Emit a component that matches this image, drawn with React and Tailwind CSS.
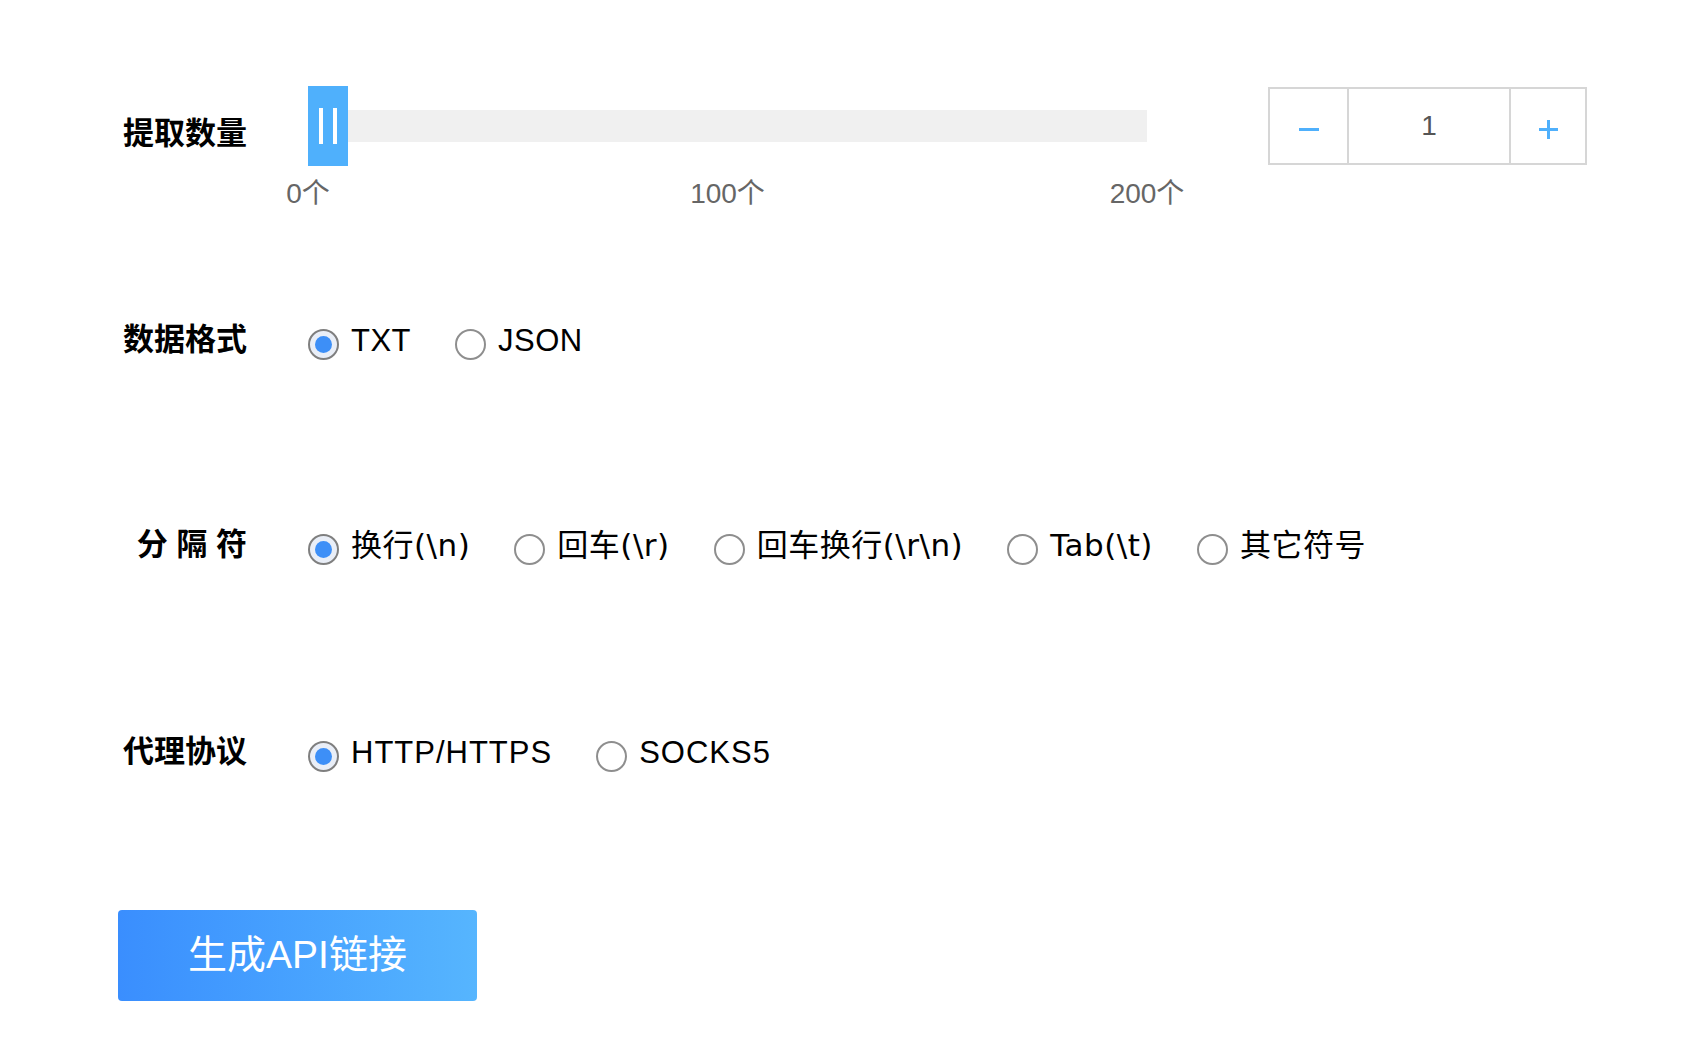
import React, { useState } from "react";

const FONT = "font-['Liberation_Sans','Noto_Sans_CJK_SC',sans-serif]";

function Radio({ checked, label, onClick, textClass }) {
  return (
    <button type="button" onClick={onClick} className="flex items-start gap-[12px] cursor-pointer">
      {checked ? (
        <span className="mt-[4px] flex size-[31px] shrink-0 items-center justify-center rounded-full border-2 border-[#7f7f7f] bg-[#e9eef7]">
          <span className="size-[17px] rounded-full bg-[#3d8ff7]" />
        </span>
      ) : (
        <span className="mt-[4px] size-[31px] shrink-0 rounded-full border-2 border-[#8e8e8e] bg-white" />
      )}
      <span className={"whitespace-pre text-[31px] leading-[31px] text-black " + textClass}>{label}</span>
    </button>
  );
}

function Label({ children, className = "" }) {
  return (
    <div className={"w-[129px] shrink-0 whitespace-pre text-right text-[31px] font-bold leading-[31px] text-black " + className}>
      {children}
    </div>
  );
}

function RadioRow({ label, options, className, textClass = "" }) {
  const [selected, setSelected] = useState(0);
  return (
    <div className={"flex h-[60px] items-center " + className}>
      <Label className="mb-[5px]">{label}</Label>
      <div className="ml-[61px] flex items-center gap-[44px]">
        {options.map((opt, i) => (
          <Radio
            key={opt}
            label={opt}
            textClass={textClass}
            checked={selected === i}
            onClick={() => setSelected(i)}
          />
        ))}
      </div>
    </div>
  );
}

export default function App() {
  const [count, setCount] = useState(1);

  const clamp = (v) => Math.max(1, Math.min(200, v));
  // handle slides over the track, 40px wide on a 839px track
  const handleLeft = ((count - 1) / 199) * 799;

  return (
    <div className={"min-h-screen bg-white pl-[118px] pt-[86px] " + FONT}>
      {/* 提取数量 */}
      <div className="flex items-start">
        <div className="flex h-[80px] items-center pt-[14px]">
          <Label>提取数量</Label>
        </div>
        <div className="ml-[61px] w-[839px] shrink-0">
          <div className="relative flex h-[80px] items-center">
            <div className="h-[32px] w-full bg-[#f0f0f0]" />
            <div
              className="absolute top-0 flex h-[80px] w-[40px] cursor-pointer items-center justify-center gap-[10px] bg-[#4fb0fc]"
              style={{ left: handleLeft }}
            >
              <span className="h-[36px] w-[4px] bg-white" />
              <span className="h-[36px] w-[4px] bg-white" />
            </div>
          </div>
          <div className="relative mt-[12px] h-[32px] whitespace-nowrap text-[28px] leading-[32px] text-[#666]">
            <span className="absolute left-0 top-0 -translate-x-1/2">0个</span>
            <span className="absolute left-1/2 top-0 -translate-x-1/2">100个</span>
            <span className="absolute left-full top-0 -translate-x-1/2">200个</span>
          </div>
        </div>
        <div className="ml-[121px] mt-[1px] flex h-[78px] border-2 border-[#d6d6d6]">
          <button
            type="button"
            onClick={() => setCount((c) => clamp(c - 1))}
            className="flex w-[77px] cursor-pointer items-center justify-center"
          >
            <span className="mt-[7px] h-[3px] w-[20px] bg-[#4fb0fc]" />
          </button>
          <div className="flex w-[164px] items-center justify-center border-x-2 border-[#d6d6d6] text-[28px] text-[#555]">
            {count}
          </div>
          <button
            type="button"
            onClick={() => setCount((c) => clamp(c + 1))}
            className="flex w-[74px] cursor-pointer items-center justify-center"
          >
            <span className="relative mt-[7px] size-[19px]">
              <span className="absolute left-0 top-[8px] h-[3px] w-[19px] bg-[#4fb0fc]" />
              <span className="absolute left-[8px] top-0 h-[19px] w-[3px] bg-[#4fb0fc]" />
            </span>
          </button>
        </div>
      </div>

      <RadioRow className="mt-[102px]" textClass="tracking-[0.5px]" label="数据格式" options={["TXT", "JSON"]} />

      <RadioRow
        className="mt-[145px]"
        textClass="font-['DejaVu_Sans','Noto_Sans_CJK_SC',sans-serif] tracking-[0.5px]"
        label="分 隔 符"
        options={["换行(\\n)", "回车(\\r)", "回车换行(\\r\\n)", "Tab(\\t)", "其它符号"]}
      />

      <RadioRow
        className="mt-[147px]"
        textClass="tracking-[1px]"
        label="代理协议"
        options={["HTTP/HTTPS", "SOCKS5"]}
      />

      <button
        type="button"
        className="mt-[126px] flex h-[91px] w-[359px] cursor-pointer items-center justify-center rounded-[4px] bg-linear-to-r from-[#3a8efe] to-[#56b5fe] text-[39px] text-white"
      >
        生成API链接
      </button>
    </div>
  );
}
